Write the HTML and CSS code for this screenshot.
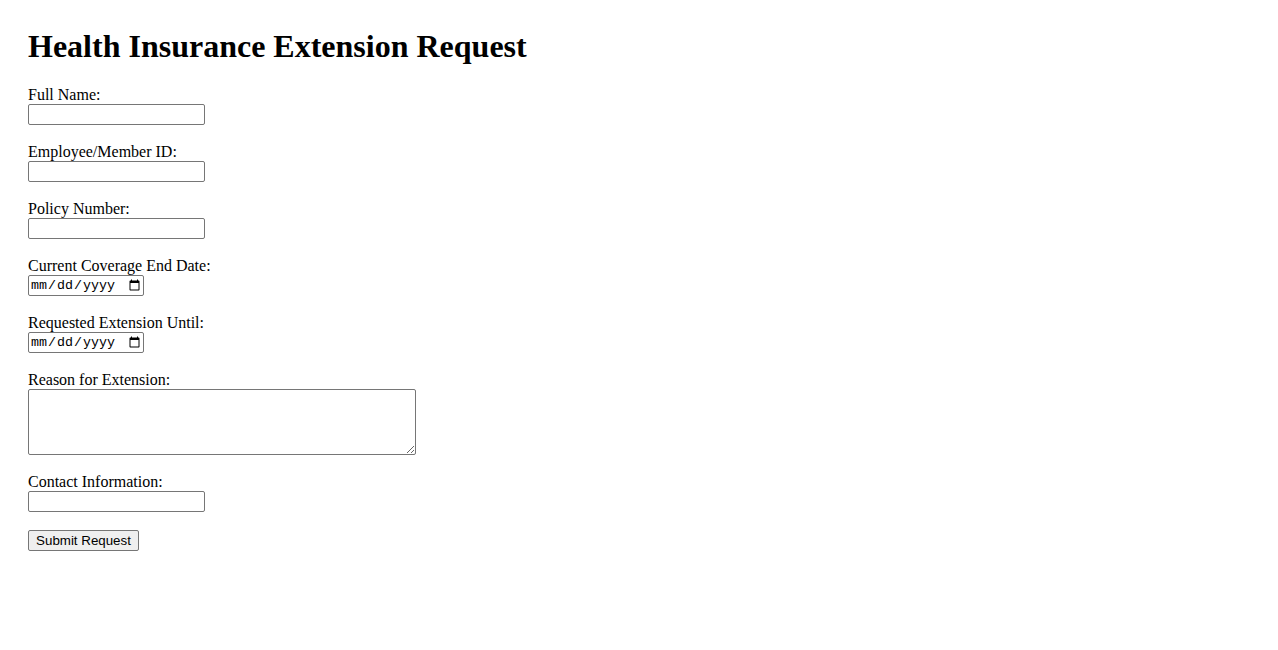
FILE: index.html
```html
<!DOCTYPE html>
<html lang="en">
<head>
<meta charset="utf-8">
<title>Health Insurance Extension Request</title>
<link rel="stylesheet" href="styles.css">
</head>
<body class="page">
  <h1 class="title">Health Insurance Extension Request</h1>
  <form class="form">
    <div class="field">
      <label class="label" for="fullname">Full Name:</label>
      <input class="text-input" type="text" id="fullname" name="fullname">
    </div>
    <div class="field">
      <label class="label" for="memberid">Employee/Member ID:</label>
      <input class="text-input" type="text" id="memberid" name="memberid">
    </div>
    <div class="field">
      <label class="label" for="policy">Policy Number:</label>
      <input class="text-input" type="text" id="policy" name="policy">
    </div>
    <div class="field">
      <label class="label" for="enddate">Current Coverage End Date:</label>
      <input class="date-input" type="date" id="enddate" name="enddate">
    </div>
    <div class="field">
      <label class="label" for="extdate">Requested Extension Until:</label>
      <input class="date-input" type="date" id="extdate" name="extdate">
    </div>
    <div class="field">
      <label class="label" for="reason">Reason for Extension:</label>
      <textarea class="area-input" id="reason" name="reason"></textarea>
    </div>
    <div class="field">
      <label class="label" for="contact">Contact Information:</label>
      <input class="text-input" type="text" id="contact" name="contact">
    </div>
    <div class="actions">
      <button class="submit" type="submit">Submit Request</button>
    </div>
  </form>
</body>
</html>
```

FILE: styles.css
```css
html, body {
  background: #ffffff;
}

.page {
  margin: 0;
  padding: 28px;
  font-family: "Liberation Serif", "Times New Roman", serif;
  font-size: 16px;
  color: #000000;
}

.title {
  margin: 0 0 21.44px 0;
  font-size: 32px;
  font-weight: bold;
  line-height: normal;
}

.form {
  display: flex;
  flex-direction: column;
  align-items: flex-start;
}

.field {
  display: flex;
  flex-direction: column;
  align-items: flex-start;
  margin-bottom: 18px;
}

.label {
  display: block;
  line-height: normal;
}

.text-input {
  box-sizing: border-box;
  width: 177px;
  height: 21px;
  margin: 0;
  padding: 1px 2px;
  border: 1px solid #767676;
  border-radius: 2px;
  font-family: "Liberation Sans", Arial, sans-serif;
  font-size: 13.333px;
}

.date-input {
  box-sizing: border-box;
  width: 116px;
  height: 21px;
  margin: 0;
  border: 1px solid #767676;
  border-radius: 2px;
  font-family: "Liberation Mono", "Courier New", monospace;
  font-size: 13.333px;
}

.area-input {
  box-sizing: border-box;
  width: 388px;
  height: 66px;
  margin: 0;
  padding: 2px;
  border: 1px solid #767676;
  border-radius: 2px;
  font-family: "Liberation Mono", "Courier New", monospace;
  font-size: 13.333px;
}

.actions {
  display: flex;
}

.submit {
  box-sizing: border-box;
  width: 111px;
  height: 21px;
  margin: 0;
  padding: 1px 6px;
  border: 1px solid #767676;
  border-radius: 2px;
  background: #efefef;
  color: #000000;
  font-family: "Liberation Sans", Arial, sans-serif;
  font-size: 13.333px;
}
```
